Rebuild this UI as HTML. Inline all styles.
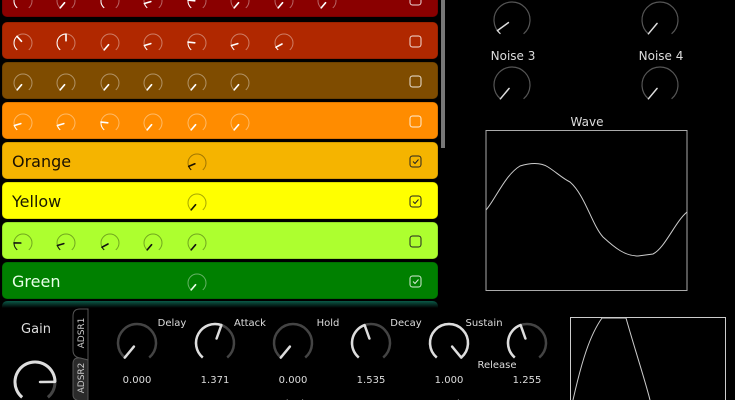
<!DOCTYPE html>
<html><head><meta charset="utf-8"><style>
html,body{margin:0;padding:0;background:#000;width:735px;height:400px;overflow:hidden;font-family:"Liberation Sans","DejaVu Sans",sans-serif}
svg{position:absolute;left:0;top:0}
</style></head><body>
<svg id="s" width="735" height="400" xmlns="http://www.w3.org/2000/svg" font-family="DejaVu Sans, Liberation Sans, sans-serif"></svg>
<script>
var s=document.getElementById('s'),h='';
function pt(cx,cy,r,a){var t=(a-90)*Math.PI/180;return [cx+r*Math.cos(t),cy+r*Math.sin(t)];}
function arc(cx,cy,r,a0,a1){var p=pt(cx,cy,r,a0),q=pt(cx,cy,r,a1);var l=(a1-a0)>180?1:0;return 'M'+p[0].toFixed(2)+' '+p[1].toFixed(2)+' A'+r+' '+r+' 0 '+l+' 1 '+q[0].toFixed(2)+' '+q[1].toFixed(2);}
function knob(cx,cy,r,v,col,dim,w,pw){var a=-140+280*v;w=w||1;pw=pw||2;
 h+='<path d="'+arc(cx,cy,r,-140,140)+'" fill="none" stroke="'+dim+'" stroke-width="'+w+'"/>';
 if(v>0.002)h+='<path d="'+arc(cx,cy,r,-140,a)+'" fill="none" stroke="'+col+'" stroke-width="'+w+'"/>';
 var p=pt(cx,cy,r*0.25,a),q=pt(cx,cy,r,a);
 h+='<line x1="'+p[0].toFixed(1)+'" y1="'+p[1].toFixed(1)+'" x2="'+q[0].toFixed(1)+'" y2="'+q[1].toFixed(1)+'" stroke="'+col+'" stroke-width="'+pw+'" stroke-linecap="round"/>';}
function box(x,y,col,chk){h+='<rect x="'+x+'" y="'+y+'" width="11" height="11" rx="2.5" fill="none" stroke="'+col+'" stroke-width="1"/>';
 if(chk)h+='<path d="M'+(x+3)+' '+(y+5.5)+' l2 2 l3.5 -4" fill="none" stroke="'+col+'" stroke-width="1"/>';}
var xs=[23,66,110,153,197,240,284,327];
var rows=[
 {y:-20,c:'#8a0000',v:[0.5,0,0.45,0.12,0.2,0,0,0],t:'#fff'},
 {y:22,c:'#b02800',v:[0.35,0.5,0,0.12,0.2,0.12,0.08],t:'#fff'},
 {y:62,c:'#7f4c00',v:[0,0,0,0,0,0],t:'#fff'},
 {y:102,c:'#ff8c00',v:[0.12,0.12,0.2,0,0,0],t:'#fff'},
 {y:142,c:'#f5b400',lab:'Orange',v:{4:0.1},t:'#1a1000',chk:1},
 {y:182,c:'#ffff00',lab:'Yellow',v:{4:0},t:'#1a1a00',chk:1},
 {y:222,c:'#adff2f',v:[0.18,0.12,0.08,0,0],t:'#111'},
 {y:262,c:'#008000',lab:'Green',v:{4:0},t:'#e8ffe8',chk:1}];
rows.forEach(function(r){
 h+='<rect x="2" y="'+r.y+'" width="436" height="37" rx="5" fill="'+r.c+'" stroke="rgba(0,0,0,0.25)"/>';
 if(r.lab)h+='<text x="12" y="'+(r.y+25)+'" font-size="16" fill="'+r.t+'">'+r.lab+'</text>';
 var dim=r.t=='#fff'||r.t=='#e8ffe8'?'rgba(255,255,255,0.4)':'rgba(0,0,0,0.35)';
 for(var k in r.v)knob(xs[k],r.y+21,9,r.v[k],r.t,dim,1,1.6);
 box(410,r.y+14,r.t=='#fff'||r.t=='#e8ffe8'?'rgba(255,255,255,0.85)':'#222',r.chk);
});
h+='<defs><linearGradient id="g" x1="0" y1="0" x2="0" y2="1"><stop offset="0" stop-color="#0b5a48"/><stop offset="1" stop-color="#000"/></linearGradient></defs>';
h+='<path d="M2 308 L2 307 Q2 301 8 301 L432 301 Q438 301 438 307 L438 308 Z" fill="url(#g)"/>';
h+='<rect x="441" y="0" width="4" height="148" fill="#777"/>';
// right panel
knob(512,20,18,0.05,'#ddd','#555',1.2,1.5);knob(660,20,18,0,'#ddd','#555',1.2,1.5);
h+='<text x="513" y="60" font-size="12" fill="#ddd" text-anchor="middle">Noise 3</text><text x="661" y="60" font-size="12" fill="#ddd" text-anchor="middle">Noise 4</text>';
knob(512,85,18,0,'#ddd','#555',1.2,1.5);knob(660,85,18,0,'#ddd','#555',1.2,1.5);
h+='<text x="587" y="126" font-size="12" fill="#ddd" text-anchor="middle">Wave</text>';
h+='<rect x="486" y="130.5" width="201" height="160" fill="none" stroke="#aaa"/>';
h+='<path d="M486 210 C495 200 505 175 520 166 C530 163 540 162 548 167 C556 172 562 178 570 182 C585 195 592 225 603 237 C615 248 625 256 638 256 L653 254 C665 248 675 222 687 212" fill="none" stroke="#ccc" stroke-width="1"/>';
// bottom
h+='<text x="36" y="333" font-size="13" fill="#ddd" text-anchor="middle">Gain</text>';
knob(35,382,20,0.82,'#ddd','#444',3,2.5);
h+='<path d="M88 309 L80 309 Q73 309 73 316 L73 350 Q73 357 80 358 L88 360 Z" fill="#000" stroke="#555"/>';
h+='<path d="M88 360 L80 358 Q73 357 73 364 L73 395 Q73 400 80 401 L88 401 Z" fill="#2a2a2a" stroke="#555"/>';
h+='<text transform="translate(84,333) rotate(-90)" font-size="9" fill="#ccc" text-anchor="middle">ADSR1</text>';
h+='<text transform="translate(84,378) rotate(-90)" font-size="9" fill="#ccc" text-anchor="middle">ADSR2</text>';
var ks=[[137,0,'Delay','0.000'],[215,0.57,'Attack','1.371'],[293,0,'Hold','0.000'],[371,0.43,'Decay','1.535'],[449,1,'Sustain','1.000'],[527,0.43,'Release','1.255']];
ks.forEach(function(k,i){knob(k[0],343,19,k[1],'#ddd','#444',2.5,2.5);
 if(i<5)h+='<text x="'+(k[0]+35)+'" y="326" font-size="10" fill="#ddd" text-anchor="middle">'+k[2]+'</text>';
 else h+='<text x="497" y="368" font-size="10" fill="#ddd" text-anchor="middle">'+k[2]+'</text>';
 h+='<text x="'+k[0]+'" y="383" font-size="10" fill="#ddd" text-anchor="middle">'+k[3]+'</text>';});
h+='<text x="293" y="407" font-size="10" fill="#ddd" text-anchor="middle">Attack Shape</text><text x="449" y="407" font-size="10" fill="#ddd" text-anchor="middle">Decay Shape</text>';
h+='<rect x="570.5" y="317.5" width="155" height="90" fill="none" stroke="#ccc"/>';
h+='<path d="M573 400 C582 360 590 335 602 318 L626 318 C635 350 645 380 650 400" fill="none" stroke="#ccc"/>';
s.innerHTML=h;
</script>
</body></html>
